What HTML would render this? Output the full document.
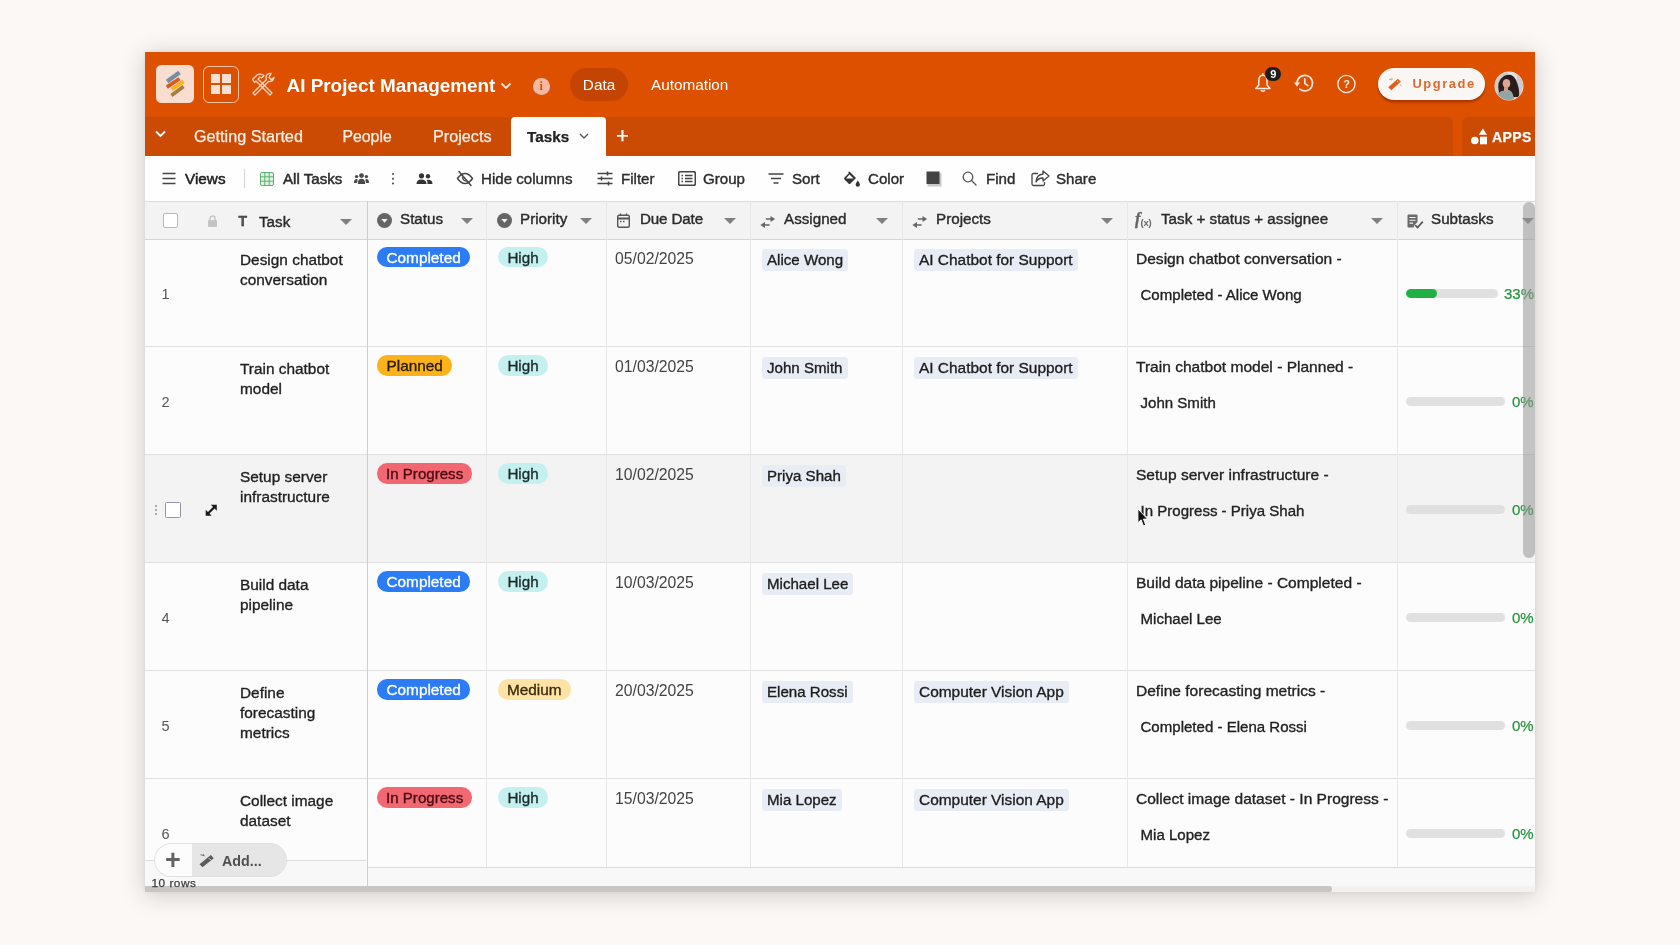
<!DOCTYPE html>
<html lang="en">
<head>
<meta charset="utf-8">
<title>AI Project Management</title>
<style>
*{box-sizing:border-box;margin:0;padding:0}
html,body{width:1680px;height:945px;overflow:hidden}
body{background:#fbf8f6;font-family:"Liberation Sans",Arial,sans-serif;color:#222;position:relative}
#win{position:absolute;left:145px;top:52px;width:1390px;height:840px;background:#fcfcfc;overflow:hidden;will-change:transform}
#shadow{position:absolute;left:145px;top:52px;width:1390px;height:840px;box-shadow:0 3px 22px 1px rgba(30,25,25,.19),0 0 4px rgba(30,25,25,.06)}
.abs{position:absolute}
#top{position:absolute;left:0;top:0;width:1390px;height:65px;background:#dd5000}
#tabs{position:absolute;left:0;top:65px;width:1390px;height:39px;background:#dd5000}
#tabs .band{position:absolute;left:0;top:0;width:1308px;height:39px;background:#cc4b04;border-top-right-radius:5px}
#tabs .apps{position:absolute;left:1317px;top:0;width:73px;height:39px;background:#cc4b04;border-top-left-radius:6px}
.tab{position:absolute;top:0;height:39px;line-height:39px;color:#fdeee6;-webkit-text-stroke:.25px currentColor;font-size:16.2px;white-space:nowrap}
#toolbar{position:absolute;left:0;top:104px;width:1390px;height:45px;background:#fefefe}
.tb{position:absolute;top:0;height:45px;line-height:46px;font-size:15.1px;color:#2b2b2b;white-space:nowrap;-webkit-text-stroke:.38px #2b2b2b}
.sb{font-weight:400;-webkit-text-stroke:.5px currentColor}
.tbi{position:absolute}
#colhead{position:absolute;left:0;top:149px;width:1390px;height:39px;background:#f3f3f3;border-top:1px solid #dcdcdc;border-bottom:1px solid #d6d6d6}
.ch{position:absolute;top:-1px;height:36px;line-height:35px;font-size:15.2px;color:#2a2a2a;white-space:nowrap;-webkit-text-stroke:.38px #2a2a2a}
.caret{position:absolute;width:0;height:0;border-left:6px solid transparent;border-right:6px solid transparent;border-top:6px solid #808080;top:16px}
.vline{position:absolute;top:149px;width:1px;height:667px;background:#e8e8e8}
.hl{position:absolute;top:0;width:1px;height:37px;background:#dddddd}
.row{position:absolute;left:0;width:1390px;border-bottom:1px solid #e1e1e1;background:#fcfcfc}
.row.hover{background:#f3f3f3}
.in{position:absolute;left:0;width:1390px;height:100px}
.num{position:absolute;left:16.500px;top:44px;font-size:14.5px;color:#555;line-height:20px}
.task{-webkit-text-stroke:.34px #1f1f1f;position:absolute;left:95px;top:10.600px;font-size:15.4px;line-height:20px;color:#1f1f1f;white-space:nowrap}
.pill{-webkit-text-stroke:.34px currentColor;position:absolute;top:7.300px;height:20.400px;line-height:21px;border-radius:10.200px;padding:0 9.5px;font-size:15.35px;white-space:nowrap}
.s-done{background:#2b7cf5;color:#fff}
.s-plan{background:#fbb21b;color:#2a1a00}
.s-prog{background:#f26872;color:#4b0a12;font-size:15.1px;padding:0 9px}
.p-high{background:#c4f0ef;color:#1c2a2a;padding:0 9.400px;font-size:15.2px}
.p-med{background:#ffe2a6;color:#3a2a08;padding:0 9px}
.date{position:absolute;left:470px;top:8.800px;font-size:15.75px;line-height:20px;color:#444}
.chip{-webkit-text-stroke:.34px #1c1c1c;position:absolute;top:9px;height:22px;line-height:22px;border-radius:3px;background:#e8edf5;padding:0 5px;font-size:15.45px;color:#1c1c1c;white-space:nowrap}
.f1{-webkit-text-stroke:.34px #222;position:absolute;left:991px;top:9.100px;font-size:15.55px;line-height:20px;color:#222;white-space:nowrap}
.f2{-webkit-text-stroke:.34px #222;position:absolute;left:995.500px;top:45.100px;font-size:15.05px;line-height:20px;color:#222;white-space:nowrap}
.bar{position:absolute;left:1261px;top:49px;height:9px;border-radius:5px;background:#e0e0e0;overflow:hidden}
.bar i{display:block;height:9px;border-radius:5px;background:#21b043}
.pct{-webkit-text-stroke:.25px #27953c;position:absolute;top:44px;font-size:15px;line-height:20px;color:#27953c;white-space:nowrap}
.cb{position:absolute;width:15px;height:15px;border:1px solid #b9b9b9;border-radius:2px;background:#fff}
.rcb{left:20px;top:46px;border-color:#9494a8;border-radius:1.500px;width:15.500px;height:15.500px}
.drag{position:absolute;left:9.500px;top:48.500px;width:2px;height:2px;background:#aaa;box-shadow:0 4px 0 #aaa,0 8px 0 #aaa}
.expand{position:absolute;left:60px;top:47.500px}
</style>
</head>
<body>
<div id="shadow"></div>
<div id="win">
<!-- top header -->
<div id="top">
  <div class="abs" style="left:10.700px;top:12.900px;width:38.600px;height:38.200px;border-radius:5.500px;background:#f9ddd1"></div>
  <svg class="abs" style="left:11px;top:13px" width="38" height="38" viewBox="0 0 38 38">
    <g stroke-linecap="butt">
      <line x1="15.400" y1="30.400" x2="27.500" y2="21.600" stroke="#a67c47" stroke-width="3.700"/>
      <line x1="10.800" y1="22.100" x2="23.500" y2="13.800" stroke="#dc5a1e" stroke-width="3.700"/>
      <line x1="15.700" y1="24.400" x2="27.500" y2="16.400" stroke="#fbb31c" stroke-width="3.700"/>
      <line x1="11.100" y1="16.400" x2="23.500" y2="7.600" stroke="#7290a4" stroke-width="4.300"/>
    </g>
  </svg>
  <div class="abs" style="left:58px;top:13.800px;width:36.200px;height:36.800px;border-radius:6px;border:1.300px solid rgba(255,222,205,.8)"></div>
  <div class="abs" style="left:65.600px;top:21.700px;width:9.100px;height:9px;background:#fadfd4"></div>
  <div class="abs" style="left:77.100px;top:21.700px;width:9.100px;height:9px;background:#fadfd4"></div>
  <div class="abs" style="left:65.600px;top:33.200px;width:9.100px;height:9.100px;background:#fadfd4"></div>
  <div class="abs" style="left:77.100px;top:33.200px;width:9.100px;height:9.100px;background:#fadfd4"></div>
  <svg class="abs" style="left:102.500px;top:18px" width="29" height="28" viewBox="0 0 28 28" fill="none" stroke="#fbd6c5" stroke-width="1.300" stroke-linejoin="round">
    <path d="M4 9.500 L8.500 5 Q12 3 15.500 5.500 L13 8 L11.500 7 L9.500 9 L23.500 23 L21.500 25 L7.500 11 L6 12.500 Z"/>
    <path d="M22.500 3.500 Q18.500 3 17.500 7 L18 9.500 L4.500 23 L6.500 25 L20 11.500 Q24.500 12 25.500 7.500 L22.500 9.500 L20.500 7.500 Z"/>
  </svg>
  <div class="abs" style="left:141.500px;top:19.500px;height:28px;line-height:28px;font-size:18.900px;font-weight:700;color:#fff;white-space:nowrap;letter-spacing:0">AI Project Management</div>
  <svg class="abs" style="left:355px;top:30px" width="12" height="8" viewBox="0 0 12 8" fill="none" stroke="#fde4d8" stroke-width="1.800"><path d="M1.500 1.500 L6 6 L10.500 1.500"/></svg>
  <div class="abs" style="left:388px;top:26px;width:16.500px;height:16.500px;border-radius:50%;background:#f3b9a2;color:#dc4f00;font-size:12px;font-weight:700;line-height:16.500px;text-align:center;font-family:'Liberation Serif',serif">i</div>
  <div class="abs" style="left:425px;top:16px;width:58px;height:33px;border-radius:17px;background:#c44503"></div>
  <div class="abs" style="left:425px;top:16px;width:58px;height:33px;line-height:33px;text-align:center;color:#fff;font-size:15.300px">Data</div>
  <div class="abs" style="left:506px;top:16px;height:33px;line-height:33px;color:#fff;font-size:15.300px">Automation</div>
  <!-- right icons -->
  <svg class="abs" style="left:1109px;top:20px" width="18" height="22" viewBox="0 0 18 22" fill="none" stroke="#fde9df" stroke-width="1.500" stroke-linejoin="round"><path d="M8.900 3.200 C5.600 3.200 4.800 6 4.800 8.800 L4.800 13 L1.800 16.400 L16 16.400 L13 13 L13 8.800 C13 6 12.200 3.200 8.900 3.200 Z"/><path d="M8.900 1.800 V3.200" stroke-linecap="round"/><path d="M7.300 18.700 Q8.900 19.900 10.500 18.700" stroke-linecap="round"/></svg>
  <div class="abs" style="left:1120.300px;top:14.600px;width:16.200px;height:14px;border-radius:7px;background:#1e1e1e;color:#fff;font-size:11px;font-weight:700;line-height:14px;text-align:center">9</div>
  <svg class="abs" style="left:1148px;top:21px" width="22" height="20" viewBox="0 0 22 20" fill="none" stroke="#fde9df" stroke-width="1.700" stroke-linecap="round" stroke-linejoin="round"><path d="M4 10.100 A7.800 7.800 0 1 1 6.800 16.100"/><path d="M0.900 9.600 L7.100 9.600 L4 13.400 Z" fill="#fde9df" stroke="none"/><path d="M11.800 5.800 V10.300 L14.800 12.600"/></svg>
  <svg class="abs" style="left:1191px;top:22px" width="21" height="21" viewBox="0 0 21 21" fill="none" stroke="#fde9df" stroke-width="1.400"><circle cx="10.400" cy="10" r="8.600"/></svg>
  <div class="abs" style="left:1191px;top:22px;width:21px;height:20px;line-height:20.500px;text-align:center;color:#fde9df;font-size:11px;font-weight:700">?</div>
  <div class="abs" style="left:1232.500px;top:16px;width:107.500px;height:31.500px;border-radius:16px;background:#faf6f3;box-shadow:0 2.500px 2px rgba(120,30,0,.5)"></div>
  <svg class="abs" style="left:1242px;top:24px" width="17" height="16" viewBox="0 0 17 16"><path d="M1.300 11.200 L10.800 2.700 L13.900 5.700 L4.300 14.300 Z" fill="#dd5f1f"/><path d="M10.300 5.200 L11.400 6.300" stroke="#faf6f3" stroke-width="1"/><path d="M2 3 L5 4 M4.500 2 L5.500 3.500 M13.500 8.500 L14.200 10" stroke="#e58a57" stroke-width=".9"/></svg>
  <div class="abs" style="left:1267.500px;top:16px;height:32px;line-height:32px;color:#e06a2e;font-size:12.900px;font-weight:700;letter-spacing:1.550px">Upgrade</div>
  <svg class="abs" style="left:1349px;top:19px" width="30" height="30" viewBox="0 0 30 30">
    <defs><clipPath id="av"><circle cx="15" cy="15" r="14"/></clipPath></defs>
    <circle cx="15" cy="15" r="14.500" fill="#f6ddd1"/>
    <g clip-path="url(#av)">
      <rect width="30" height="30" fill="#cfcbcc"/>
      <rect x="14" y="0" width="9" height="16" fill="#e4e2e2"/>
      <path d="M5 22 Q2 10 10 5 Q18 1 22 9 Q26 18 25 26 L18 26 L8 24 Z" fill="#2b1d1b"/>
      <ellipse cx="12.500" cy="12.500" rx="3.800" ry="4.600" fill="#d9a793"/>
      <path d="M1 30 Q3 20 10 19.500 L15 19 Q20 21 20 30 Z" fill="#8fa6a6"/>
      <path d="M10 16 L14 17 L14 21 L10 20 Z" fill="#cf9a86"/>
    </g>
  </svg>
</div>
<!-- tabs -->
<div id="tabs">
  <div class="band"></div>
  <div class="apps"></div>
  <svg class="abs" style="left:10px;top:13px" width="11" height="8" viewBox="0 0 11 8" fill="none" stroke="#fff" stroke-width="1.800"><path d="M1 1.500 L5.500 6 L10 1.500"/></svg>
  <div class="tab" style="left:49px">Getting Started</div>
  <div class="tab" style="left:197.500px;font-size:15.800px">People</div>
  <div class="tab" style="left:288px">Projects</div>
  <div class="abs" style="left:366px;top:0;width:95px;height:39px;background:#fefefe;border-radius:4px 4px 0 0"></div>
  <div class="tab" style="left:382px;color:#222;font-weight:700;font-size:15.300px">Tasks</div>
  <svg class="abs" style="left:434px;top:16px" width="10" height="7" viewBox="0 0 10 7" fill="none" stroke="#555" stroke-width="1.400"><path d="M1 1 L5 5 L9 1"/></svg>
  <div class="tab" style="left:471px;font-size:22px;color:#fff;line-height:37.500px">+</div>
  <svg class="abs" style="left:1325px;top:11px" width="18" height="18" viewBox="0 0 18 18" fill="#fff"><circle cx="4.800" cy="12.500" r="3.800"/><rect x="10" y="8.700" width="7" height="7.600"/><path d="M12.900 0.600 L17 6.800 L8.800 6.800 Z"/></svg>
  <div class="tab" style="left:1347px;font-size:14px;font-weight:700;color:#fff;letter-spacing:.4px;line-height:40px">APPS</div>
</div>
<!-- toolbar -->
<div id="toolbar">
  <svg class="tbi" style="left:17px;top:16px" width="14" height="13" viewBox="0 0 14 13" stroke="#444" stroke-width="1.500"><path d="M0.500 1.500H13.500M0.500 6.500H13.500M0.500 11.500H13.500"/></svg>
  <div class="tb sb" style="left:40px;font-size:15.300px;color:#222">Views</div>
  <div class="abs" style="left:99px;top:13px;width:1px;height:19px;background:#d5d5d5"></div>
  <svg class="tbi" style="left:115px;top:16px" width="14" height="14" viewBox="0 0 14 14"><rect x="0.500" y="0.500" width="13" height="13" rx="1.500" fill="#dff3e3" stroke="#5fae72" stroke-width="1"/><path d="M0.500 4.800H13.500M0.500 9.200H13.500M4.800 0.500V13.500M9.200 0.500V13.500" stroke="#5fae72" stroke-width="1"/></svg>
  <div class="tb sb" style="left:138px;font-size:15.100px;color:#2c2c2c">All Tasks</div>
  <svg class="tbi" style="left:209px;top:17px" width="15" height="11" viewBox="0 0 15 11" fill="#4a4a4a"><circle cx="7.500" cy="2.600" r="2.400"/><path d="M3.800 11 Q3.800 5.800 7.500 5.800 Q11.200 5.800 11.200 11 Z"/><circle cx="2.600" cy="3.600" r="1.700"/><path d="M0 10 Q0 6 2.600 6 Q3.600 6 3.600 7 L3 10 Z"/><circle cx="12.400" cy="3.600" r="1.700"/><path d="M15 10 Q15 6 12.400 6 Q11.400 6 11.400 7 L12 10 Z"/></svg>
  <div class="abs" style="left:246.800px;top:16.800px;width:2.700px;height:2.700px;border-radius:50%;background:#444;box-shadow:0 4.700px 0 #444,0 9.400px 0 #444"></div>
  <svg class="tbi" style="left:271px;top:17px" width="17" height="11" viewBox="0 0 17 11" fill="#333"><circle cx="5.500" cy="2.800" r="2.600"/><path d="M0.500 11 Q0.500 6.500 5.500 6.500 Q10.500 6.500 10.500 11 Z"/><circle cx="12" cy="3.200" r="2.200"/><path d="M11.500 11 Q11.800 7.500 10.500 6.800 Q16.500 6 16.500 11 Z"/></svg>
  <svg class="tbi" style="left:311px;top:14px" width="18" height="17" viewBox="0 0 18 17" fill="none" stroke="#444" stroke-width="1.450" stroke-linecap="round"><path d="M1.500 8.500 Q5 3.500 9 3.500 Q13 3.500 16.500 8.500 Q13 13.500 9 13.500 Q5 13.500 1.500 8.500 Z"/><path d="M6.500 7.500 Q7 11 10.500 11"/><path d="M3 1.500 L15 15.500" stroke-width="1.500"/></svg>
  <div class="tb" style="left:336px">Hide columns</div>
  <svg class="tbi" style="left:452px;top:15px" width="16" height="15" viewBox="0 0 16 15" fill="none" stroke="#444" stroke-width="1.500"><path d="M0.500 2.500H15.500M0.500 7.500H15.500M0.500 12.500H15.500M10.500 0.500V4.500M4.500 5.500V9.500M11.500 10.500V14.500"/></svg>
  <div class="tb" style="left:476px">Filter</div>
  <svg class="tbi" style="left:533px;top:15px" width="18" height="15" viewBox="0 0 18 15" fill="none" stroke="#444" stroke-width="1.550"><rect x="0.700" y="0.700" width="16.600" height="13.600" rx="1.500"/><path d="M3.500 4.500H5M7 4.500H14.500M3.500 7.500H5M7 7.500H14.500M3.500 10.500H5M7 10.500H14.500"/></svg>
  <div class="tb" style="left:558px">Group</div>
  <svg class="tbi" style="left:623px;top:17px" width="16" height="11" viewBox="0 0 16 11" fill="none" stroke="#444" stroke-width="1.400"><path d="M0.500 1H15.500M3 5.500H13M5.500 10H10.500"/></svg>
  <div class="tb" style="left:647px">Sort</div>
  <svg class="tbi" style="left:698px;top:14px" width="18" height="17" viewBox="0 0 18 17" fill="#333"><path d="M6.500 1.500 L13 8 L7.500 13.500 Q6.500 14.500 5.500 13.500 L1.500 9.500 Q0.500 8.500 1.500 7.500 L6 3 L5 2 Z M3 8.500 L10.500 8.500 L6.500 4.500 Z"/><path d="M14.800 10.500 Q17 13.500 17 14.500 A2.200 2.200 0 0 1 12.600 14.500 Q12.600 13.500 14.800 10.500 Z"/></svg>
  <div class="tb" style="left:723px">Color</div>
  <svg class="tbi" style="left:780px;top:14px" width="18" height="18" viewBox="0 0 18 18"><rect x="2.500" y="3" width="14" height="13.500" fill="#c9c9c9"/><rect x="1.500" y="1.500" width="13" height="12.500" fill="#444"/></svg>
  <svg class="tbi" style="left:817px;top:15px" width="15" height="15" viewBox="0 0 15 15" fill="none" stroke="#555" stroke-width="1.300"><circle cx="6" cy="6" r="4.800"/><path d="M9.500 9.500 L14 14" stroke-linecap="round"/></svg>
  <div class="tb" style="left:841px">Find</div>
  <svg class="tbi" style="left:886px;top:14px" width="19" height="17" viewBox="0 0 19 17" fill="none" stroke="#444" stroke-width="1.300" stroke-linejoin="round"><path d="M7 3.500 H2.500 Q1 3.500 1 5 V14 Q1 15.500 2.500 15.500 H12 Q13.500 15.500 13.500 14 V12"/><path d="M12 1 L18 6 L12 11 V8 Q7 8 5 12 Q5.500 4.500 12 4 Z"/></svg>
  <div class="tb" style="left:911px">Share</div>
</div>
<!-- column header -->
<div id="colhead">
  <span class="cb" style="left:18px;top:11px"></span>
  <svg class="abs" style="left:63px;top:12.500px" width="9" height="12" viewBox="0 0 9 12"><rect x="0" y="5" width="9" height="7" rx="1" fill="#c4c4c4"/><path d="M2 5 V3.500 A2.500 2.500 0 0 1 7 3.500 V5" fill="none" stroke="#c4c4c4" stroke-width="1.400"/></svg>
  <div class="ch" style="left:93.500px;top:1.500px;font-size:14px;font-weight:700;color:#555">T</div>
  <div class="ch" style="left:114px;top:1.500px">Task</div>
  <i class="caret" style="left:195px;top:17px"></i>
  <svg class="abs" style="left:232px;top:11px" width="15" height="15" viewBox="0 0 15 15"><circle cx="7.500" cy="7.500" r="7.500" fill="#666"/><path d="M4.300 6 L10.700 6 L7.500 9.800 Z" fill="#f3f3f3"/></svg>
  <div class="ch" style="left:255px">Status</div>
  <i class="caret" style="left:316px"></i>
  <svg class="abs" style="left:352px;top:11px" width="15" height="15" viewBox="0 0 15 15"><circle cx="7.500" cy="7.500" r="7.500" fill="#666"/><path d="M4.300 6 L10.700 6 L7.500 9.800 Z" fill="#f3f3f3"/></svg>
  <div class="ch" style="left:375px">Priority</div>
  <i class="caret" style="left:435px"></i>
  <svg class="abs" style="left:472px;top:11px" width="13" height="15" viewBox="0 0 13 15" fill="none" stroke="#555" stroke-width="1.400"><rect x="0.700" y="2.200" width="11.600" height="12" rx="1.500"/><path d="M0.700 5.500H12.300" stroke-width="2"/><path d="M3.500 0.500V3M9.500 0.500V3M3 8.500H4.500M6 8.500H7.500"/></svg>
  <div class="ch" style="left:495px;letter-spacing:-.15px">Due Date</div>
  <i class="caret" style="left:579px"></i>
  <svg class="abs" style="left:615px;top:13.500px" width="15.500" height="12" viewBox="0 0 16 13" fill="#666"><path d="M11 0 L16 3.200 L11 6.400 V4 H6 V2.400 H11 Z"/><path d="M5 6.600 L0 9.800 L5 13 V10.600 H10 V9 H5 Z"/></svg>
  <div class="ch" style="left:639px">Assigned</div>
  <i class="caret" style="left:731px"></i>
  <svg class="abs" style="left:767px;top:13.500px" width="15.500" height="12" viewBox="0 0 16 13" fill="#666"><path d="M11 0 L16 3.200 L11 6.400 V4 H6 V2.400 H11 Z"/><path d="M5 6.600 L0 9.800 L5 13 V10.600 H10 V9 H5 Z"/></svg>
  <div class="ch" style="left:791px">Projects</div>
  <i class="caret" style="left:956px"></i>
  <div class="ch" style="left:990px;font-size:16.500px;font-style:italic;font-weight:700;color:#666;font-family:'Liberation Serif',serif;-webkit-text-stroke:.3px #666">f<span style="font-size:9.500px;font-style:normal;font-family:'Liberation Sans',sans-serif;position:relative;top:2px;letter-spacing:-.2px;-webkit-text-stroke:0">(x)</span></div>
  <div class="ch" style="left:1016px">Task + status + assignee</div>
  <i class="caret" style="left:1226px"></i>
  <svg class="abs" style="left:1262px;top:11.500px" width="17" height="15" viewBox="0 0 17 15"><path d="M1.500 0.500 H9.500 Q10.500 0.500 10.500 1.500 V8 L7.500 11 L6.500 13.500 H1.500 Q0.500 13.500 0.500 12.500 V1.500 Q0.500 0.500 1.500 0.500 Z" fill="#6a6a6a"/><path d="M2.500 3.500H8.500M2.500 6.300H8.500M2.500 9.100H6" stroke="#f3f3f3" stroke-width="1.100"/><path d="M8.200 11.200 L10.500 13.500 L15.800 7.600" fill="none" stroke="#555" stroke-width="1.700"/></svg>
  <div class="ch" style="left:1286px">Subtasks</div>
  <i class="caret" style="left:1377px"></i>
<i class="hl" style="left:341px"></i><i class="hl" style="left:461px"></i><i class="hl" style="left:605px"></i><i class="hl" style="left:757px"></i><i class="hl" style="left:982px"></i><i class="hl" style="left:1252px"></i>
</div>
<!-- grid lines -->
<div class="abs" style="left:221.600px;top:149px;width:1.800px;height:691px;background:#cdcdcd;z-index:5"></div>
<div class="vline" style="left:341px;z-index:5"></div>
<div class="vline" style="left:461px;z-index:5"></div>
<div class="vline" style="left:605px;z-index:5"></div>
<div class="vline" style="left:757px;z-index:5"></div>
<div class="vline" style="left:982px;z-index:5"></div>
<div class="vline" style="left:1252px;z-index:5"></div>

<div class="row" style="top:188px;height:107px"><div class="in" style="top:-0.3px">
<span class="num">1</span>
<div class="task">Design chatbot<br>conversation</div>
<span class="pill s-done" style="left:232px">Completed</span>
<span class="pill p-high" style="left:353px">High</span>
<span class="date">05/02/2025</span>
<span class="chip" style="left:617px;font-size:15.100px">Alice Wong</span>
<span class="chip" style="left:769px">AI Chatbot for Support</span>
<span class="f1">Design chatbot conversation -</span><span class="f2">Completed - Alice Wong</span>
<span class="bar" style="width:92px"><i style="width:31px"></i></span><span class="pct" style="left:1359px">33%</span>
</div></div>
<div class="row" style="top:295px;height:108px"><div class="in" style="top:1.2px">
<span class="num">2</span>
<div class="task">Train chatbot<br>model</div>
<span class="pill s-plan" style="left:232px">Planned</span>
<span class="pill p-high" style="left:353px">High</span>
<span class="date">01/03/2025</span>
<span class="chip" style="left:617px;font-size:15.100px">John Smith</span>
<span class="chip" style="left:769px">AI Chatbot for Support</span>
<span class="f1">Train chatbot model - Planned -</span><span class="f2">John Smith</span>
<span class="bar" style="width:99px"></span><span class="pct" style="left:1367px">0%</span>
</div></div>
<div class="row hover" style="top:403px;height:108px"><div class="in" style="top:1.2px">
<span class="drag"></span><span class="cb rcb"></span><svg class="expand" viewBox="0 0 12.500 12.500" width="12.500" height="12.500"><path d="M2.800 9.700 L9.700 2.800" stroke="#1a1a1a" stroke-width="2.300"/><path d="M5.800 0.700 H11.800 V6.700 Z M0.700 5.800 V11.800 H6.700 Z" fill="#1a1a1a"/></svg>
<div class="task">Setup server<br>infrastructure</div>
<span class="pill s-prog" style="left:232px">In Progress</span>
<span class="pill p-high" style="left:353px">High</span>
<span class="date">10/02/2025</span>
<span class="chip" style="left:617px;font-size:15.100px">Priya Shah</span>
<span class="f1">Setup server infrastructure -</span><span class="f2">In Progress - Priya Shah</span>
<span class="bar" style="width:99px"></span><span class="pct" style="left:1367px">0%</span>
</div></div>
<div class="row" style="top:511px;height:108px"><div class="in" style="top:1.2px">
<span class="num">4</span>
<div class="task">Build data<br>pipeline</div>
<span class="pill s-done" style="left:232px">Completed</span>
<span class="pill p-high" style="left:353px">High</span>
<span class="date">10/03/2025</span>
<span class="chip" style="left:617px;font-size:15.100px">Michael Lee</span>
<span class="f1">Build data pipeline - Completed -</span><span class="f2">Michael Lee</span>
<span class="bar" style="width:99px"></span><span class="pct" style="left:1367px">0%</span>
</div></div>
<div class="row" style="top:619px;height:108px"><div class="in" style="top:1.2px">
<span class="num">5</span>
<div class="task">Define<br>forecasting<br>metrics</div>
<span class="pill s-done" style="left:232px">Completed</span>
<span class="pill p-med" style="left:353px">Medium</span>
<span class="date">20/03/2025</span>
<span class="chip" style="left:617px;font-size:15.100px">Elena Rossi</span>
<span class="chip" style="left:769px">Computer Vision App</span>
<span class="f1">Define forecasting metrics -</span><span class="f2">Completed - Elena Rossi</span>
<span class="bar" style="width:99px"></span><span class="pct" style="left:1367px">0%</span>
</div></div>
<div class="row" style="top:727px;height:108px"><div class="in" style="top:1.2px">
<span class="num">6</span>
<div class="task">Collect image<br>dataset</div>
<span class="pill s-prog" style="left:232px">In Progress</span>
<span class="pill p-high" style="left:353px">High</span>
<span class="date">15/03/2025</span>
<span class="chip" style="left:617px;font-size:15.100px">Mia Lopez</span>
<span class="chip" style="left:769px">Computer Vision App</span>
<span class="f1">Collect image dataset - In Progress -</span><span class="f2">Mia Lopez</span>
<span class="bar" style="width:99px"></span><span class="pct" style="left:1367px">0%</span>
</div></div>
<!-- bottom area -->
<div class="abs" style="left:223px;top:815px;width:1167px;height:25px;background:#f8f8f8;border-top:1px solid #dcdcdc;z-index:6"></div>
<div class="abs" style="left:0;top:808px;width:221px;height:32px;background:#f8f8f8;border-top:1px solid #dcdcdc;z-index:6"></div>
<div class="abs" style="left:9px;top:791px;width:133px;height:34px;border-radius:17px;background:#e6e6e6;border:1px solid #e0e0e0;overflow:hidden;z-index:7"><div class="abs" style="left:0;top:0;width:37px;height:34px;background:#fcfcfc"></div></div>
<div class="abs" style="left:12px;top:792px;width:32px;height:33px;line-height:32px;font-size:27px;font-weight:700;color:#646464;z-index:8;text-align:center">+</div>
<svg class="abs" style="left:53px;top:800.500px;z-index:8" width="17" height="15.500" viewBox="0 0 17 15"><path d="M1.500 11 L12.800 1.800 L15.800 5 L4.500 14 Z" fill="#5c5c5c"/><path d="M11 5 L13 7" stroke="#e6e6e6" stroke-width="1"/><path d="M2.500 1.500 L6 2.500 M5 0.800 L6.500 3" stroke="#6a6a6a" stroke-width=".9"/></svg>
<div class="abs" style="left:77px;top:791.500px;height:33px;line-height:34px;font-size:14.300px;font-weight:700;color:#505050;z-index:8">Add...</div>
<div class="abs" style="left:6.500px;top:824.300px;font-size:11.800px;letter-spacing:.5px;line-height:15px;color:#3a3a3a;-webkit-text-stroke:.25px #3a3a3a;z-index:11">10 rows</div>
<!-- scrollbars -->
<div class="abs" style="left:0;top:834px;width:1390px;height:6px;background:#f2f2f2;z-index:9"></div>
<div class="abs" style="left:0;top:834px;width:1187px;height:6px;background:#c6c6c6;border-radius:0 4px 4px 0;z-index:10"></div>
<div class="abs" style="left:1378px;top:150px;width:12px;height:356px;border-radius:6px;background:rgba(150,150,150,.55);z-index:10"></div>
<!-- cursor -->
<svg class="abs" style="left:991.500px;top:455.500px;z-index:20" width="12" height="19.400" viewBox="0 0 13 21"><path d="M1 1 L1 16 L4.500 12.800 L7 19.500 L9.500 18.500 L7 12 L11.500 12 Z" fill="#111" stroke="#fff" stroke-width="1"/></svg>
</div>
</body>
</html>
